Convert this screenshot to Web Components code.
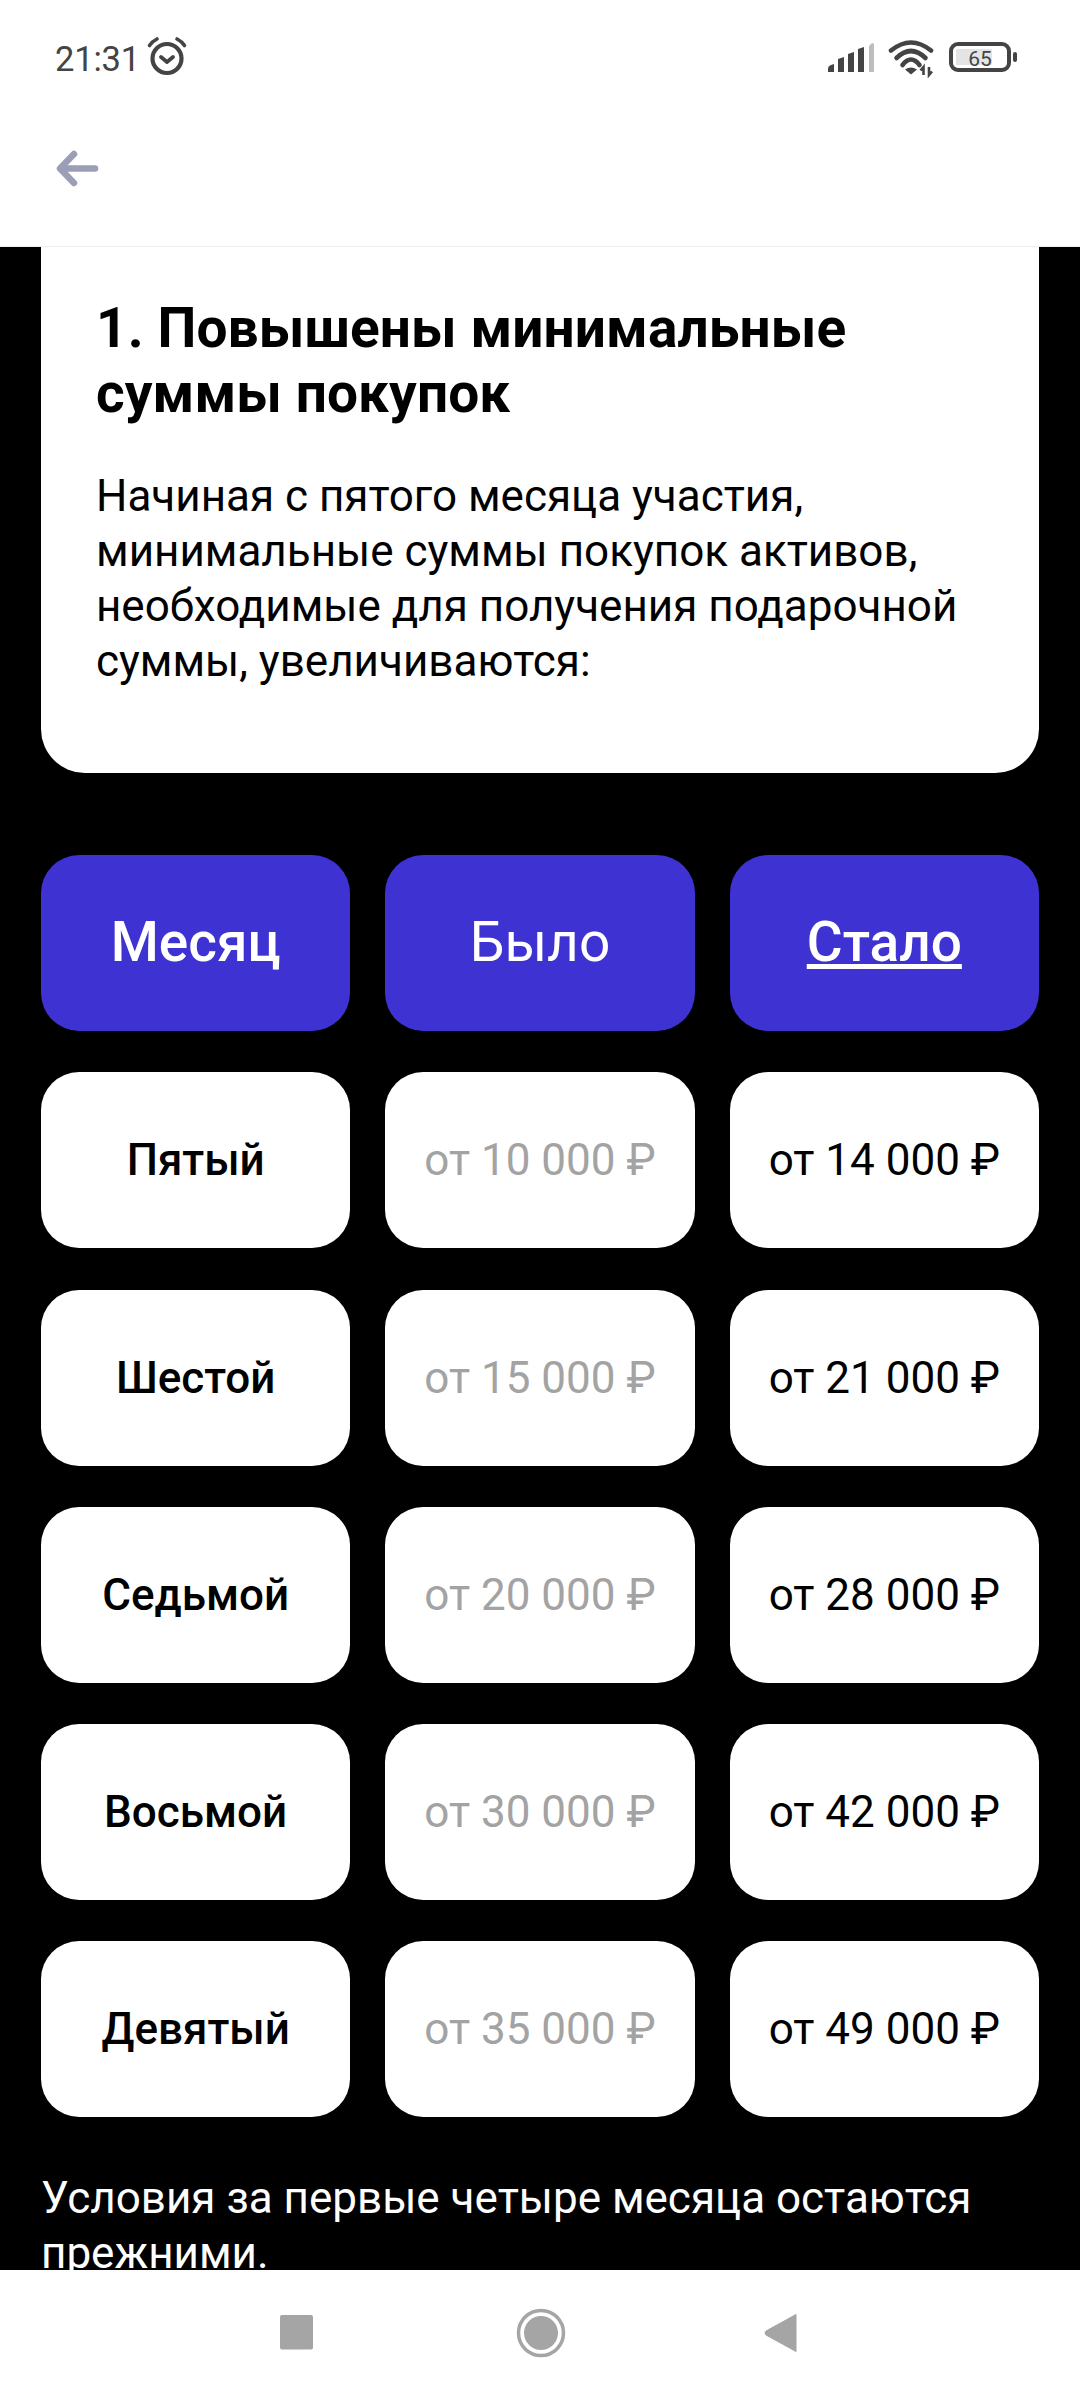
<!DOCTYPE html>
<html lang="ru"><head><meta charset="utf-8"><style>
html,body{margin:0;padding:0;background:#000}
body{width:1080px;height:2400px;overflow:hidden;display:flex;flex-direction:column;font-family:Roboto,"Noto Sans",sans-serif}
</style></head><body>
<status-bar></status-bar>
<app-bar></app-bar>
<scroll-area>
  <info-card title-text="1. Повышены минимальные суммы покупок">Начиная с пятого месяца участия, минимальные суммы покупок активов, необходимые для получения подарочной суммы, увеличиваются:</info-card>
  <price-table>
    <table-cell kind="head" style="font-weight:500">Месяц</table-cell><table-cell kind="head">Было</table-cell><table-cell kind="head" style="font-weight:500;text-decoration:underline">Стало</table-cell>
    <table-cell kind="month">Пятый</table-cell><table-cell kind="old">от 10 000 ₽</table-cell><table-cell>от 14 000 ₽</table-cell>
    <table-cell kind="month">Шестой</table-cell><table-cell kind="old">от 15 000 ₽</table-cell><table-cell>от 21 000 ₽</table-cell>
    <table-cell kind="month">Седьмой</table-cell><table-cell kind="old">от 20 000 ₽</table-cell><table-cell>от 28 000 ₽</table-cell>
    <table-cell kind="month">Восьмой</table-cell><table-cell kind="old">от 30 000 ₽</table-cell><table-cell>от 42 000 ₽</table-cell>
    <table-cell kind="month">Девятый</table-cell><table-cell kind="old">от 35 000 ₽</table-cell><table-cell>от 49 000 ₽</table-cell>
  </price-table>
  <foot-note>Условия за первые четыре месяца остаются прежними.</foot-note>
</scroll-area>
<nav-bar></nav-bar>
<script>
function def(name,html,init){
  customElements.define(name,class extends HTMLElement{
    constructor(){super();this.attachShadow({mode:'open'}).innerHTML=html;}
    connectedCallback(){if(init)init(this);}
  });
}
def('status-bar',`<style>
:host{display:flex;flex:none;height:80px;background:#fff;align-items:flex-start;color:#444;position:relative;z-index:1}
.t{margin:38px 0 0 55px;font-size:34.5px;line-height:42px;width:91px;letter-spacing:-.2px}
svg{display:block}
.a{margin:36px 0 0 0}
</style>
<div class="t">21:31</div>
<svg class="a" width="42" height="42" viewBox="0 0 42 42" fill="none" stroke="#444" stroke-linecap="round">
<circle cx="21" cy="22.500" r="14.500" stroke-width="4.200"/>
<path d="M15 21l6 5 6-5" stroke-width="3.800" stroke-linejoin="round"/>
<path d="M3.500 9.500C5.500 6.500 8 4.500 11 3M38.500 9.500C36.500 6.500 34 4.500 31 3" stroke-width="3.600"/>
</svg>
<svg width="200" height="40" viewBox="828 38 200 40" style="margin:38px 52px 0 auto;display:block">
<g fill="#444"><path d="M828 72v-3q0-3 3-4l3-1v8zM838 72V59l6-2v15zM848 72V54l6-2v20zM858 72V49l6-2v25z"/></g>
<path d="M869 72V46l3-3q2 0 2 2v27z" fill="#bdbdbd"/>
<g fill="none" stroke="#444" stroke-width="4.600" stroke-linecap="round"><path d="M891 50.500Q911 34.500 931 50.500"/><path d="M896.500 58Q911 44 925.500 58"/><path d="M902.500 65Q911 54 919.500 65"/></g>
<path d="M905 69.500q6-4 12 0l-6 5z" fill="#444"/>
<path d="M923.500 75v-8l-3 3.500m8.500-3.500v8l3-3.500" fill="none" stroke="#444" stroke-width="2.600"/>
<rect x="951" y="44" width="58" height="26" rx="7" fill="none" stroke="#444" stroke-width="4"/>
<rect x="956" y="49" width="36" height="16" fill="#e4e4e4"/>
<rect x="1013" y="52" width="4" height="10" rx="2" fill="#444"/>
<text x="980" y="66" text-anchor="middle" font-family="Roboto" font-size="21" fill="#444">65</text>
</svg>`);
def('app-bar',`<style>
:host{display:flex;flex:none;height:167px;box-sizing:border-box;background:#fff;border-bottom:1px solid #eee;padding:70px 0 0 56px;position:relative;z-index:1}
svg{display:block}
</style>
<svg width="44" height="40" viewBox="0 0 44 40" fill="none" stroke="#9a9eb6" stroke-width="6.500" stroke-linecap="round" stroke-linejoin="round">
<path d="M18 4L4 18.500 18 33M5 18.500h34"/></svg>`);
def('scroll-area',`<style>
:host{display:block;flex:none;height:2023px;overflow:hidden;background:#000;box-sizing:border-box;padding:0 41px}
.in{margin-top:-46px}
</style><div class="in"><slot></slot></div>`);
def('info-card',`<style>
:host{display:block;background:#fff;border-radius:44px;color:#000;padding:95px 56px 0 55px;height:572px;box-sizing:border-box}
h2{margin:0 0 43px;font-size:55px;line-height:65px;font-weight:700;letter-spacing:.1px}
p{margin:0;font-size:44px;line-height:55px}
</style><h2></h2><p><slot></slot></p>`,el=>{el.shadowRoot.querySelector('h2').textContent=el.getAttribute('title-text');});
def('price-table',`<style>
:host{display:grid;grid-template-columns:repeat(3,1fr);column-gap:35px;row-gap:41.25px;margin-top:82px}
</style><slot></slot>`);
def('table-cell',`<style>
:host{display:flex;height:176px;align-items:center;justify-content:center;background:#fff;border-radius:38px;color:#000;font-size:44px;white-space:nowrap}
:host([kind=head]){background:#3e32d2;color:#fff;font-size:55px;box-sizing:border-box;padding-bottom:2px}
:host([kind=month]){font-weight:500}
:host([kind=old]){color:#a3a3a3}
</style><slot></slot>`);
def('foot-note',`<style>
:host{display:block;color:#fff;font-size:44px;line-height:55px;margin:54px 0 0}
</style><slot></slot>`);
def('nav-bar',`<style>
:host{display:flex;flex:none;height:130px;background:#fff;padding:38px 0 0 280px;box-sizing:border-box;align-items:flex-start;position:relative;z-index:1}
svg{display:block}
</style>
<svg width="33" height="35" style="margin-top:7px"><rect width="33" height="34.500" rx="2" fill="#a5a5a5"/></svg>
<svg width="50" height="50" style="margin-left:203px" fill="none"><circle cx="25" cy="25" r="22.500" stroke="#a5a5a5" stroke-width="3.500"/><circle cx="25" cy="25" r="17" fill="#a5a5a5"/></svg>
<svg width="34" height="40" style="margin-left:198px;margin-top:5px"><path d="M32 1.500v37L2 22q-2-2 0-4z" fill="#a5a5a5" stroke="#a5a5a5" stroke-linejoin="round"/></svg>`);
</script>
</body></html>
